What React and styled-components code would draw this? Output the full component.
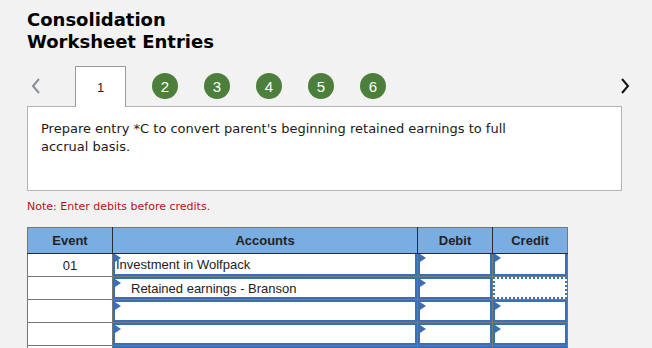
import React from "react";
import styled, { createGlobalStyle } from "styled-components";

const GlobalStyle = createGlobalStyle`
  html, body {
    margin: 0;
    padding: 0;
    background: #f2f2f2;
  }
  body {
    font-family: "DejaVu Sans", Verdana, sans-serif;
    color: #222;
    height: 348px;
    overflow: hidden;
  }
`;

const Page = styled.div`
  padding: 9px 0 0 27px;
  width: 596px;
`;

const Title = styled.h1`
  margin: 0;
  font-family: "DejaVu Sans", Verdana, sans-serif;
  font-weight: bold;
  font-size: 18px;
  line-height: 22px;
  color: #000;
`;

const TabBar = styled.div`
  display: flex;
  align-items: center;
  width: 605px;
  height: 40px;
  margin-top: 13px;
`;

const Arrow = styled.button`
  border: none;
  background: none;
  padding: 0;
  width: 14px;
  height: 20px;
  display: flex;
  align-items: center;
  justify-content: center;
  color: ${(p) => (p.$disabled ? "#8a8f99" : "#111")};
  cursor: pointer;
`;

const PrevArrow = styled(Arrow)`
  margin-left: 2px;
`;

const NextArrow = styled(Arrow)`
  margin-left: auto;
`;

const ActiveTab = styled.div`
  width: 51px;
  height: 41px;
  margin-left: 32px;
  margin-right: 26px;
  margin-bottom: -1px;
  align-self: flex-start;
  box-sizing: border-box;
  border: 1px solid #9a9a9a;
  border-bottom: none;
  background: #fff;
  display: flex;
  align-items: center;
  justify-content: center;
  font-family: "Liberation Sans", Arial, sans-serif;
  font-size: 13px;
  color: #222;
  position: relative;
  z-index: 1;
`;

const StepCircle = styled.div`
  width: 26px;
  height: 26px;
  border-radius: 50%;
  background: #4b7f3b;
  color: #fff;
  display: flex;
  align-items: center;
  justify-content: center;
  font-family: "Liberation Sans", Arial, sans-serif;
  font-size: 15px;
  margin-right: 26px;
`;

const Panel = styled.div`
  width: 595px;
  height: 85px;
  box-sizing: border-box;
  border: 1px solid #b3b3b3;
  background: #fff;
  padding: 13px 13px 0 13px;
`;

const Prompt = styled.p`
  margin: 0;
  width: 500px;
  font-size: 13px;
  line-height: 18px;
  color: #1a1a1a;
`;

const Note = styled.p`
  margin: 9px 0 0 0;
  font-size: 11px;
  line-height: 14px;
  color: #b3121c;
`;

const Table = styled.table`
  margin-top: 13px;
  border-collapse: collapse;
  table-layout: fixed;
  width: 541px;
  font-family: "Liberation Sans", Arial, sans-serif;
  font-size: 13px;
`;

const HeadCell = styled.th`
  background: #7aaee3;
  border: 1px solid #2b2b2b;
  border-top-color: #777;
  border-left-color: ${(p) => (p.$first ? "#777" : "#2b2b2b")};
  border-right-color: ${(p) => (p.$last ? "#777" : "#2b2b2b")};
  height: 25px;
  padding: 0;
  font-weight: bold;
  color: #222;
  text-align: center;
`;

const EventCell = styled.td`
  background: #fff;
  border: 1px solid #777;
  height: 22px;
  padding: 0;
  text-align: center;
  color: #222;
`;

const InputCell = styled.td`
  border: 1px solid #777;
  height: 22px;
  padding: 0;
  background: #fff;
`;

const Field = styled.div`
  position: relative;
  height: 22px;
  box-sizing: border-box;
  border: 2px solid #3b6fb3;
  border-top-width: ${(p) => (p.$firstRow ? "0" : "2px")};
  border-style: ${(p) => (p.$focused ? "dotted" : "solid")};
  display: flex;
  align-items: center;
  padding-left: ${(p) => (p.$indent ? "16px" : "1px")};
  color: #222;
  white-space: nowrap;
  overflow: hidden;
`;

const Marker = styled.span`
  position: absolute;
  left: 0;
  top: 0;
  width: 0;
  height: 0;
  border-top: 4px solid transparent;
  border-bottom: 4px solid transparent;
  border-left: 6px solid #3b6fb3;
`;

const ChevronLeft = () => (
  <svg width="10" height="16" viewBox="0 0 10 16">
    <path d="M8 1 L2 8 L8 15" fill="none" stroke="currentColor" strokeWidth="2" />
  </svg>
);

const ChevronRight = () => (
  <svg width="10" height="16" viewBox="0 0 10 16">
    <path d="M2 1 L8 8 L2 15" fill="none" stroke="currentColor" strokeWidth="2" />
  </svg>
);

const rows = [
  { event: "01", account: "Investment in Wolfpack" },
  { event: "", account: "Retained earnings - Branson", indent: true },
  { event: "", account: "" },
  { event: "", account: "" },
  { event: "", account: "" },
];

const Entry = ({ children, firstRow, focused, indent }) => (
  <Field $firstRow={firstRow} $focused={focused} $indent={indent}>
    {!focused && <Marker />}
    {children}
  </Field>
);

export default function App() {
  return (
    <>
      <GlobalStyle />
      <Page>
        <Title>
          Consolidation
          <br />
          Worksheet Entries
        </Title>
        <TabBar>
          <PrevArrow $disabled aria-label="previous">
            <ChevronLeft />
          </PrevArrow>
          <ActiveTab>1</ActiveTab>
          {[2, 3, 4, 5, 6].map((n) => (
            <StepCircle key={n}>{n}</StepCircle>
          ))}
          <NextArrow aria-label="next">
            <ChevronRight />
          </NextArrow>
        </TabBar>
        <Panel>
          <Prompt>
            Prepare entry *C to convert parent's beginning retained earnings to full
            accrual basis.
          </Prompt>
        </Panel>
        <Note>Note: Enter debits before credits.</Note>
        <Table>
          <colgroup>
            <col style={{ width: 85 }} />
            <col style={{ width: 305 }} />
            <col style={{ width: 75 }} />
            <col style={{ width: 75 }} />
          </colgroup>
          <thead>
            <tr>
              <HeadCell $first>Event</HeadCell>
              <HeadCell>Accounts</HeadCell>
              <HeadCell>Debit</HeadCell>
              <HeadCell $last>Credit</HeadCell>
            </tr>
          </thead>
          <tbody>
            {rows.map((r, i) => (
              <tr key={i}>
                <EventCell>{r.event}</EventCell>
                <InputCell>
                  <Entry firstRow={i === 0} indent={r.indent}>
                    {r.account}
                  </Entry>
                </InputCell>
                <InputCell>
                  <Entry firstRow={i === 0} />
                </InputCell>
                <InputCell>
                  <Entry firstRow={i === 0} focused={i === 1} />
                </InputCell>
              </tr>
            ))}
          </tbody>
        </Table>
      </Page>
    </>
  );
}
